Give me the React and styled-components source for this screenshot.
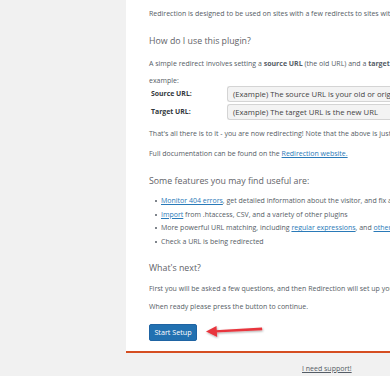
import React from "react";
import styled, { createGlobalStyle } from "styled-components";

const GlobalStyle = createGlobalStyle`
    html, body {
        margin: 0;
        padding: 0;
        background: #f1f1f1;
        overflow: hidden;
    }
    body {
        font-family: 'Open Sans', 'Noto Sans', sans-serif;
        color: #555d66;
    }
`;

const Page = styled.div`
    display: flex;
    width: 390px;
    height: 376px;
`;

const Gutter = styled.div`
    flex: 0 0 126px;
    background: #f1f1f1;
`;

const Main = styled.div`
    flex: 1;
    min-width: 0;
    display: flex;
    flex-direction: column;
    overflow: hidden;
`;

const Panel = styled.div`
    background: #fff;
    padding: 5px 0 12px 23px;
    border-bottom: 2px solid #d54e21;
    white-space: nowrap;
    overflow: hidden;
`;

const Text = styled.p`
    margin: ${(props) => props.mt || 0}px 0 0;
    font-size: 7px;
    line-height: ${(props) => props.lh || 16}px;
    color: #555d66;
`;

const Heading = styled.h3`
    margin: ${(props) => props.mt || 0}px 0 0;
    font-size: 8.8px;
    line-height: ${(props) => props.lh || 16}px;
    font-weight: 400;
    color: #5f6368;
`;

const Link = styled.a`
    color: #2a7ab8;
    text-decoration: underline;
`;

const Table = styled.div`
    margin-top: -3px;
    display: grid;
    grid-template-columns: 76px 1fr;
    row-gap: 2px;
    padding-left: 2px;
`;

const Label = styled.div`
    font-size: 6.9px;
    font-weight: 700;
    color: #32373c;
    line-height: 16px;
`;

const FakeInput = styled.div`
    height: 16px;
    box-sizing: border-box;
    border: 1px solid #d4d4d4;
    border-right: none;
    border-radius: 3px 0 0 3px;
    background: #f3f3f3;
    padding-left: 5px;
    font-size: 7.7px;
    line-height: 14px;
    color: #444;
`;

const List = styled.ul`
    margin: 4px 0 0;
    padding: 0 0 0 12px;
    list-style: none;
`;

const Item = styled.li`
    position: relative;
    font-size: 7px;
    line-height: 13.7px;
    color: #555d66;
    &::before {
        content: '';
        position: absolute;
        left: -6px;
        top: 6px;
        width: 2px;
        height: 2px;
        border-radius: 50%;
        background: #555d66;
    }
`;

const ActionRow = styled.div`
    margin-top: 9px;
    display: flex;
    align-items: center;
    gap: 8px;
`;

const Button = styled.button`
    height: 17px;
    width: 48px;
    padding: 0;
    border: 1px solid #1f64a3;
    border-radius: 2px;
    background: #2271b1;
    color: #fff;
    font-family: 'Open Sans', 'Noto Sans', sans-serif;
    font-size: 7.2px;
    line-height: 15px;
`;

const Footer = styled.div`
    padding: 9px 0 0 176px;
    font-size: 7px;
    line-height: 14px;
    white-space: nowrap;
`;

const SupportLink = styled.a`
    color: #555d66;
    text-decoration: underline;
`;

function Arrow() {
    return (
        <svg width="60" height="16" viewBox="0 0 60 16" style={{ marginTop: -2 }}>
            <defs>
                <filter id="sh" x="-20%" y="-50%" width="140%" height="200%">
                    <feDropShadow dx="0.6" dy="1" stdDeviation="0.8" floodColor="#000" floodOpacity="0.35" />
                </filter>
            </defs>
            <g filter="url(#sh)">
                <path d="M10 7.2 L57 4.6 L57.3 7.2 L10.2 9.6 Z" fill="#e8363e" />
                <path d="M1 8.6 L11.5 3 L12.2 14 Z" fill="#e8363e" />
            </g>
        </svg>
    );
}

export default function App() {
    return (
        <Page>
            <GlobalStyle />
            <Gutter />
            <Main>
                <Panel>
                    <Text lh={18}>Redirection is designed to be used on sites with a few redirects to sites with thousands of redirects.</Text>
                    <Heading mt={10}>How do I use this plugin?</Heading>
                    <Text mt={6} lh={17}>
                        A simple redirect involves setting a <b>source URL</b> (the old URL) and a <b>target URL</b> (the new URL). Here's an
                        <br />
                        example:
                    </Text>
                    <Table>
                        <Label>Source URL:</Label>
                        <FakeInput>(Example) The source URL is your old or original URL</FakeInput>
                        <Label>Target URL:</Label>
                        <FakeInput>(Example) The target URL is the new URL</FakeInput>
                    </Table>
                    <Text mt={6}>That's all there is to it - you are now redirecting! Note that the above is just an example.</Text>
                    <Text mt={4}>Full documentation can be found on the <Link href="#">Redirection website.</Link></Text>
                    <Heading mt={10} lh={18}>Some features you may find useful are:</Heading>
                    <List>
                        <Item><Link href="#">Monitor 404 errors</Link>, get detailed information about the visitor, and fix any problems</Item>
                        <Item><Link href="#">Import</Link> from .htaccess, CSV, and a variety of other plugins</Item>
                        <Item>More powerful URL matching, including <Link href="#">regular expressions</Link>, and <Link href="#">other conditions</Link></Item>
                        <Item>Check a URL is being redirected</Item>
                    </List>
                    <Heading mt={11}>What's next?</Heading>
                    <Text mt={5}>First you will be asked a few questions, and then Redirection will set up your database.</Text>
                    <Text mt={2}>When ready please press the button to continue.</Text>
                    <ActionRow>
                        <Button>Start Setup</Button>
                        <Arrow />
                    </ActionRow>
                </Panel>
                <Footer>
                    <SupportLink href="#">I need support!</SupportLink>
                </Footer>
            </Main>
        </Page>
    );
}
